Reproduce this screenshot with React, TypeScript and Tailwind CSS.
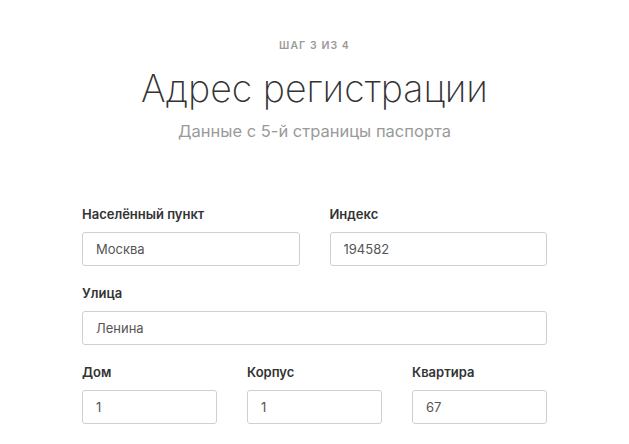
import React from "react";

function Field({ label, value }: { label: string; value: string }) {
  return (
    <div className="flex flex-col">
      <label className="text-[13px] leading-[18px] font-semibold text-[#333]">{label}</label>
      <input
        readOnly
        value={value}
        className="mt-[9px] h-[34px] w-full rounded-[3px] border border-[#cfcfcf] bg-white px-[13px] text-[13px] text-[#555] outline-none"
      />
    </div>
  );
}

export default function App() {
  return (
    <div className="min-h-[444px] bg-white font-['Inter','Noto_Sans',sans-serif]">
      <div className="flex flex-col items-center pt-[40px]">
        <p className="text-[10.5px] leading-[12px] font-semibold tracking-[0.1em] text-[#9a9a9a]">ШАГ 3 ИЗ 4</p>
        <h1 className="mt-[14px] text-[37.5px] leading-[46px] font-extralight text-[#333]">Адрес регистрации</h1>
        <p className="mt-[8px] text-[16.5px] leading-[22px] text-[#9a9a9a]">Данные с 5-й страницы паспорта</p>
      </div>
      <div className="mx-auto mt-[63px] flex w-[465px] flex-col gap-[18px]">
        <div className="grid grid-cols-2 gap-[30px]">
          <Field label="Населённый пункт" value="Москва" />
          <Field label="Индекс" value="194582" />
        </div>
        <Field label="Улица" value="Ленина" />
        <div className="grid grid-cols-3 gap-[30px]">
          <Field label="Дом" value="1" />
          <Field label="Корпус" value="1" />
          <Field label="Квартира" value="67" />
        </div>
      </div>
    </div>
  );
}
